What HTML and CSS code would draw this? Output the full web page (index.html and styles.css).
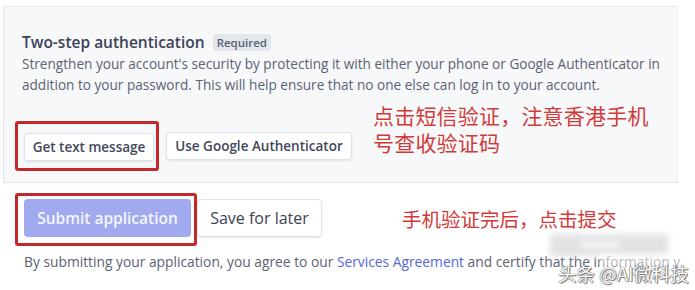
FILE: index.html
```html
<!DOCTYPE html>
<html lang="en">
<head>
<meta charset="utf-8">
<title>Two-step authentication</title>
<link rel="stylesheet" href="styles.css">
</head>
<body>
<div class="page">
  <section class="panel">
    <div class="title-row">
      <h2 class="title">Two-step authentication</h2>
      <span class="badge">Required</span>
    </div>
    <p class="desc">Strengthen your account's security by protecting it with either your phone or Google Authenticator in addition to your password. This will help ensure that no one else can log in to your account.</p>
    <div class="btn-row">
      <span class="mark mark-sms"><button class="btn">Get text message</button></span>
      <button class="btn">Use Google Authenticator</button>
    </div>
    <div class="note note-sms">点击短信验证，注意香港手机<br>号查收验证码</div>
  </section>
  <section class="footer">
    <div class="actions">
      <span class="mark mark-submit"><button class="btn btn-primary">Submit application</button></span>
      <button class="btn btn-large">Save for later</button>
    </div>
    <p class="legal">By submitting your application, you agree to our <a class="link">Services Agreement</a> and certify that the information y</p>
    <div class="note note-submit">手机验证完后，点击提交</div>
    <div class="blur-patch"></div>
    <div class="blur-text"></div>
    <div class="watermark">头条 @AI微科技</div>
  </section>
</div>
</body>
</html>
```
FILE: styles.css
```css
* { box-sizing: border-box; }
html, body {
  margin: 0;
  padding: 0;
  background: #ffffff;
}
body {
  width: 695px;
  height: 290px;
  overflow: hidden;
  font-family: "Open Sans", "Noto Sans CJK SC", sans-serif;
  color: #3c4257;
}
.page {
  position: relative;
  padding-top: 6px;
}
.panel {
  position: relative;
  margin-left: 3px;
  width: 675px;
  background: #f7f8fa;
  border-top: 1px solid #e8ebef;
  border-left: 1px solid #e3e6ea;
  border-right: 1px solid #eef0f3;
  border-bottom: 1px solid #e3e6ea;
  padding: 25px 4px 11px 18px;
}
.title-row {
  display: flex;
  align-items: center;
  gap: 8px;
  height: 20px;
}
.title {
  margin: 0;
  font-size: 15.5px;
  font-weight: 600;
  color: #3c4257;
  line-height: 20px;
}
.badge {
  background: #e3e7ec;
  color: #5a6176;
  font-size: 11.5px;
  font-weight: 600;
  line-height: 17px;
  padding: 0 4px;
  border-radius: 3px;
}
.desc {
  margin: 1px 0 0;
  font-size: 13.6px;
  line-height: 21px;
  color: #5c6274;
  letter-spacing: 0;
}
.btn-row {
  display: flex;
  align-items: center;
  gap: 7px;
  margin-top: 26px;
  margin-left: -7px;
}
.mark {
  display: inline-flex;
  border: 3px solid #c3282b;
  border-radius: 3px;
}
.mark-sms {
  padding: 9px 2px 7px 6px;
}
.btn {
  font-family: "Open Sans", sans-serif;
  font-size: 13.5px;
  font-weight: 600;
  color: #424859;
  background: #ffffff;
  border: 1px solid #dfe2e8;
  border-radius: 4px;
  box-shadow: 0 1px 2px rgba(60, 66, 87, 0.12);
  height: 28px;
  padding: 0 6px;
  line-height: 26px;
  white-space: nowrap;
}
.mark-sms .btn { width: 130px; }
.btn-row > .btn { width: 186px; }
.note {
  position: absolute;
  color: #d23a3a;
  font-family: "Noto Sans CJK SC", sans-serif;
  font-size: 21px;
  line-height: 27px;
  letter-spacing: 0.2px;
}
.note-sms {
  left: 369px;
  top: 95px;
}
.footer {
  position: relative;
  height: 106px;
  padding: 10px 0 0 15px;
}
.actions {
  display: flex;
  align-items: flex-start;
}
.mark-submit {
  padding: 3px 3px 6px 6px;
}
.btn-primary {
  width: 167px;
  height: 38px;
  background: #a1aaee;
  border: none;
  color: #f4f5ff;
  font-size: 15.5px;
  font-weight: 600;
  box-shadow: none;
  border-radius: 4px;
  line-height: 38px;
}
.btn-large {
  margin-top: 6px;
  width: 125px;
  height: 38px;
  font-size: 16px;
  font-weight: 500;
  color: #3c4257;
  line-height: 36px;
}
.legal {
  margin: 7px 0 0 9px;
  font-size: 13.8px;
  line-height: 18px;
  color: #5c6274;
  white-space: nowrap;
}
.link {
  color: #5469d4;
  font-weight: 500;
}
.note-submit {
  left: 402px;
  top: 22px;
  font-size: 19.5px;
  letter-spacing: 0;
}
.blur-patch {
  position: absolute;
  left: 550px;
  top: 51px;
  width: 118px;
  height: 22px;
  background: #e2e2e4;
  filter: blur(3px);
}
.blur-patch::after {
  content: "";
  position: absolute;
  left: 30px;
  top: 8px;
  width: 40px;
  height: 5px;
  background: #fafafa;
}
.blur-text {
  position: absolute;
  left: 600px;
  top: 70px;
  width: 95px;
  height: 14px;
  background: rgba(255, 255, 255, 0.55);
  filter: blur(2px);
}
.watermark {
  position: absolute;
  left: 558px;
  top: 78px;
  font-family: "Noto Sans CJK SC", sans-serif;
  font-size: 18.5px;
  line-height: 24px;
  color: #ffffff;
  text-shadow: 0 0 1px #555, 0 0 1px #555, 1px 1px 1px #777;
  white-space: nowrap;
}
```
